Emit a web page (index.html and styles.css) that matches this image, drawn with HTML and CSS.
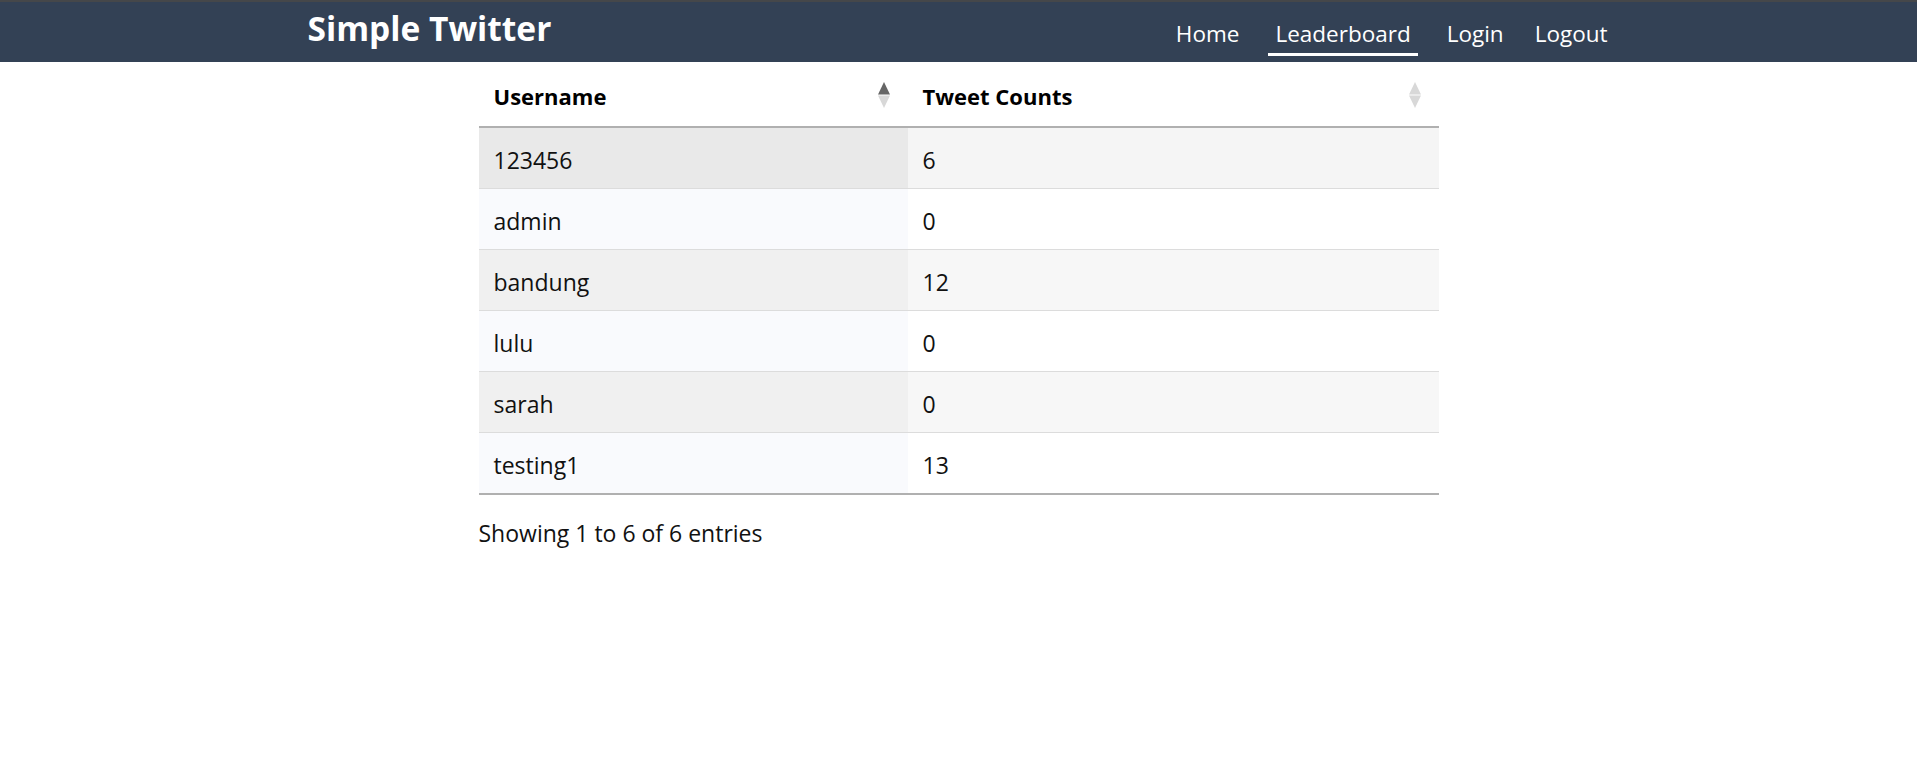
FILE: index.html
```html
<!DOCTYPE html>
<html lang="en">
<head>
<meta charset="utf-8">
<title>Simple Twitter - Leaderboard</title>
<link rel="stylesheet" href="styles.css">
</head>
<body>
<header class="navbar">
  <div class="nav-inner">
    <a class="brand" href="#">Simple Twitter</a>
    <nav class="nav-links">
      <a class="nav-link" href="#">Home</a>
      <a class="nav-link active" href="#">Leaderboard</a>
      <a class="nav-link" href="#">Login</a>
      <a class="nav-link logout" href="#">Logout</a>
    </nav>
  </div>
</header>
<main class="container">
  <table class="leaderboard">
    <thead>
      <tr>
        <th class="col-user">
          <div class="th-inner">
            <span>Username</span>
            <svg class="sort-icon" width="12" height="26" viewBox="0 0 12 26"><polygon points="0,12.6 6,0 12,12.6" fill="#666666"/><polygon points="0,13.4 6,26 12,13.4" fill="#d8d8d8"/></svg>
          </div>
        </th>
        <th class="col-count">
          <div class="th-inner">
            <span>Tweet Counts</span>
            <svg class="sort-icon" width="12" height="26" viewBox="0 0 12 26"><polygon points="0,12.6 6,0 12,12.6" fill="#d8d8d8"/><polygon points="0,13.4 6,26 12,13.4" fill="#d8d8d8"/></svg>
          </div>
        </th>
      </tr>
    </thead>
    <tbody>
      <tr class="odd hover"><td>123456</td><td>6</td></tr>
      <tr class="even"><td>admin</td><td>0</td></tr>
      <tr class="odd"><td>bandung</td><td>12</td></tr>
      <tr class="even"><td>lulu</td><td>0</td></tr>
      <tr class="odd"><td>sarah</td><td>0</td></tr>
      <tr class="even last"><td>testing1</td><td>13</td></tr>
    </tbody>
  </table>
  <div class="info">Showing 1 to 6 of 6 entries</div>
</main>
</body>
</html>
```

FILE: styles.css
```css
* { box-sizing: border-box; }

html, body {
  margin: 0;
  padding: 0;
  background: #ffffff;
  font-family: "Open Sans", "Noto Sans", sans-serif;
  color: #111111;
}

.navbar {
  background: #334155;
  border-top: 2px solid #45474a;
  height: 62px;
}

.nav-inner {
  width: 1312px;
  margin: 0 auto;
  padding-left: 5px;
  height: 60px;
  display: flex;
  align-items: flex-start;
  justify-content: space-between;
}

.brand {
  color: #ffffff;
  text-decoration: none;
  font-weight: 700;
  font-size: 33.5px;
  line-height: 48px;
  padding-top: 2px;
}

.nav-links {
  display: flex;
  gap: 22px;
}

.nav-link {
  color: #ffffff;
  text-decoration: none;
  font-size: 22.5px;
  line-height: 36px;
  padding: 14px 7px 1px;
  border-bottom: 3px solid transparent;
}

.nav-link.active {
  border-bottom-color: #ffffff;
}

.nav-link.logout {
  margin-left: -5px;
}

.container {
  width: 960px;
  margin: 0 auto;
}

.leaderboard {
  width: 960px;
  border-collapse: collapse;
  border-spacing: 0;
  font-size: 23px;
  line-height: 36px;
}

.leaderboard th {
  text-align: left;
  font-weight: 700;
  font-size: 22px;
  padding: 16px 18px 12px 15px;
  border-bottom: 2px solid #b0b0b0;
  color: #000000;
}

.th-inner {
  display: flex;
  align-items: center;
  justify-content: space-between;
}

.sort-icon { display: block; margin-top: -3px; }

.col-user { width: 429px; }

.leaderboard td {
  padding: 14px 15px 10px;
  border-bottom: 1px solid #dcdcdc;
}

.leaderboard tr.last td {
  border-bottom: 2px solid #b0b0b0;
}

.leaderboard tr.odd td { background: #f7f7f7; }
.leaderboard tr.odd td:first-child { background: #f0f0f0; }
.leaderboard tr.even td { background: #ffffff; }
.leaderboard tr.even td:first-child { background: #f9fafd; }
.leaderboard tr.hover td { background: #f5f5f5; }
.leaderboard tr.hover td:first-child { background: #e9e9e9; }

.info {
  padding-top: 20px;
  font-size: 23px;
  line-height: 36px;
}
```
